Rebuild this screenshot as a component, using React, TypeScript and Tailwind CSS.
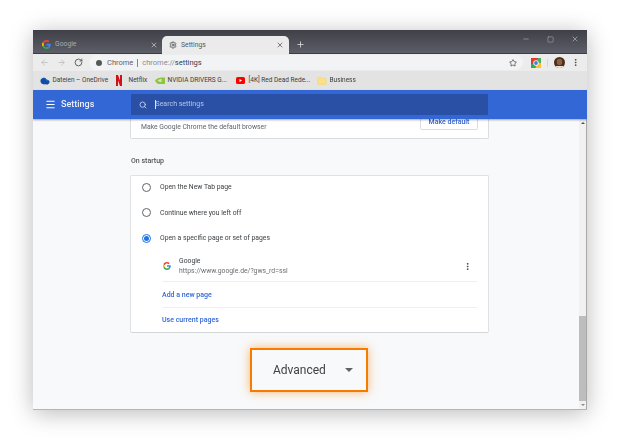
import React from "react";
import { ArrowLeft, ArrowRight, RotateCw, Menu, Search, X, Plus, Minus, Square, Star, MoreVertical, Settings, Cloud, Folder } from "lucide-react";

function GoogleG({ size = 12 }: { size?: number }) {
  return (
    <svg width={size} height={size} viewBox="0 0 48 48" className="shrink-0">
      <path fill="#EA4335" d="M24 9.5c3.5 0 6.7 1.3 9.1 3.5l6.8-6.8C35.8 2.4 30.2 0 24 0 14.6 0 6.5 5.4 2.6 13.2l7.9 6.1C12.4 13.6 17.7 9.5 24 9.5z" />
      <path fill="#4285F4" d="M46.5 24.5c0-1.6-.1-3.1-.4-4.500H24v9h12.700c-.6 2.900-2.200 5.400-4.700 7.100l7.600 5.900c4.400-4.100 6.900-10.100 6.900-17.500z" />
      <path fill="#FBBC05" d="M10.500 28.700c-.5-1.400-.8-3-.8-4.700s.3-3.200.8-4.700l-7.900-6.100C.9 16.500 0 20.100 0 24s.9 7.500 2.600 10.800l7.900-6.100z" />
      <path fill="#34A853" d="M24 48c6.500 0 11.900-2.100 15.900-5.800L32.300 36.300c-2.100 1.400-4.900 2.300-8.300 2.300-6.300 0-11.600-4.100-13.500-9.900l-7.900 6.100C6.500 42.600 14.600 48 24 48z" />
    </svg>
  );
}

function Bookmark({ icon, label, w }: { icon: React.ReactNode; label: string; w: string }) {
  return (
    <div className={`flex items-center ${w}`}>
      <div className="w-[12.5px] shrink-0 flex items-center">{icon}</div>
      <span className="text-[6.5px] text-[#3c3c3c] whitespace-nowrap">{label}</span>
    </div>
  );
}

function Radio({ checked, label }: { checked?: boolean; label: string }) {
  return (
    <div className="h-[25.5px] flex items-center pl-[11px] gap-[9px]">
      <div className={`w-[9px] h-[9px] rounded-full border-[1.5px] flex items-center justify-center ${checked ? "border-[#1a73e8]" : "border-[#5f6368]"}`}>
        {checked && <div className="w-[4.5px] h-[4.5px] rounded-full bg-[#1a73e8]" />}
      </div>
      <span className="text-[6.8px] text-[#3c4043]">{label}</span>
    </div>
  );
}

export default function App() {
  return (
    <div className="w-[620px] h-[440px] bg-white pt-[30px] pl-[33px] overflow-hidden font-['Roboto',sans-serif]">
      <div className="w-[554px] h-[380px] flex flex-col overflow-hidden shadow-[0_3px_22px_rgba(0,0,0,0.28)] border-b border-[#b5b5b5] blur-[0.3px]">
        {/* Tab strip */}
        <div className="h-[24px] shrink-0 flex items-end bg-gradient-to-b from-[#3f4047] to-[#5c5e68] border-b border-[#3d3e45]">
          <div className="w-[129px] h-[18px] flex items-center pl-[9px] pr-[4px] pt-[1px] gap-[4px]">
            <GoogleG size={9} />
            <span className="text-[6.8px] text-[#a9abb0] flex-1">Google</span>
            <X size={8} className="text-[#d5d6d9]" strokeWidth={2} />
          </div>
          <div className="w-[127px] h-[18px] -mb-px bg-[#ebebeb] rounded-t-[5px] flex items-center pl-[7px] pr-[5px] gap-[4px]">
            <Settings size={8} className="text-[#55575c]" strokeWidth={2.6} />
            <span className="text-[6.8px] text-[#55575c] flex-1">Settings</span>
            <X size={8} className="text-[#444]" strokeWidth={2} />
          </div>
          <div className="h-[18px] flex items-center pl-[7px]">
            <Plus size={9} className="text-[#d8d9dc]" strokeWidth={2.2} />
          </div>
          <div className="flex-1" />
          <div className="h-[18px] flex items-center self-start gap-[17px] pr-[8px]">
            <Minus size={8} className="text-[#a5a7ac]" />
            <Square size={7} className="text-[#a5a7ac]" />
            <X size={8} className="text-[#b9bbbf]" />
          </div>
        </div>

        {/* Toolbar */}
        <div className="h-[17px] shrink-0 bg-[#ececec] flex items-center pl-[7px]">
          <ArrowLeft size={9} className="text-[#b8b9ba]" />
          <ArrowRight size={9} className="text-[#b8b9ba] ml-[7.5px]" />
          <RotateCw size={9} className="text-[#555] ml-[8px]" strokeWidth={2.4} />
          <div className="ml-[6.5px] w-[434px] h-[15px] rounded-full bg-[#f2f3f5] flex items-center pl-[7px] pr-[6px]">
            <div className="w-[6px] h-[6px] rounded-full bg-[#55575a]" />
            <span className="text-[7.5px] text-[#5f6368] ml-[5px]">Chrome</span>
            <span className="w-px h-[8px] bg-[#888] mx-[4px]" />
            <span className="text-[7.5px] text-[#8a8c90]">chrome://<span className="text-[#3c4043]">settings</span></span>
            <div className="flex-1" />
            <Star size={8} className="text-[#333]" strokeWidth={2} />
          </div>
          <svg width="10" height="10" viewBox="0 0 10 10" className="ml-[8px] shrink-0">
            <rect width="10" height="10" fill="#e33a2e" />
            <path d="M7 0h3v5H5z" fill="#4fae5c" />
            <path d="M0 6h3l2 4H0z" fill="#34a853" />
            <path d="M10 5v5H4.500L5 5z" fill="#fbc02d" />
            <circle cx="5" cy="5" r="2.700" fill="#fff" />
            <circle cx="5" cy="5" r="1.900" fill="#3f7fe8" />
          </svg>
          <div className="w-px h-[8px] bg-[#d4d4d4] ml-[6px]" />
          <svg width="11" height="11" viewBox="0 0 11 11" className="ml-[5.500px] shrink-0">
            <defs>
              <clipPath id="av"><circle cx="5.500" cy="5.500" r="5.500" /></clipPath>
            </defs>
            <g clipPath="url(#av)">
              <rect width="11" height="11" fill="#4a2f1e" />
              <ellipse cx="5.500" cy="5" rx="2.700" ry="3.200" fill="#8f5f3f" />
              <rect x="2" y="9" width="7" height="2" fill="#e8e4df" />
            </g>
          </svg>
          <MoreVertical size={9} className="text-[#444] ml-[6.5px]" strokeWidth={2.4} />
        </div>

        {/* Bookmarks */}
        <div className="h-[19px] shrink-0 bg-[#e3e3e3] flex items-center pl-[7px]">
          <Bookmark w="w-[76px]" label="Dateien – OneDrive" icon={<Cloud size={10} className="text-[#0f4fa8] fill-[#0f4fa8]" />} />
          <Bookmark w="w-[39px]" label="Netflix" icon={
            <svg width="6" height="11" viewBox="0 0 6 11"><path d="M0 0h2v11H0zM4 0h2v11H4z" fill="#c4161f" /><path d="M0 0h2l4 11H4z" fill="#e50914" /></svg>
          } />
          <Bookmark w="w-[81px]" label="NVIDIA DRIVERS G..." icon={
            <svg width="10" height="7" viewBox="0 0 10 7"><path d="M0 3.500C2 1 4 .5 10 .5V7H3C1.500 6 .5 5 0 3.500z" fill="#8cc63f" /><path d="M2.500 3.500C4 2.500 5 2 6.500 2v3C5 5 4 4.500 2.500 3.500z" fill="#d5e8b0" /></svg>
          } />
          <Bookmark w="w-[81px]" label="[4K] Red Dead Rede..." icon={
            <svg width="9" height="7" viewBox="0 0 9 7"><rect width="9" height="7" rx="1.600" fill="#f00" /><path d="M3.500 2v3l2.500-1.500z" fill="#fff" /></svg>
          } />
          <Bookmark w="w-[60px]" label="Business" icon={<Folder size={10} className="text-[#f7d774] fill-[#fbe08a]" />} />
        </div>

        {/* Blue header */}
        <div className="h-[29px] shrink-0 bg-[#3367d6] flex items-center shadow-[0_1px_2px_rgba(0,0,0,0.35)] z-10">
          <div className="w-[98px] shrink-0 flex items-center pl-[12px] gap-[5px]">
            <Menu size={11} className="text-white" strokeWidth={2.4} />
            <span className="text-[9px] font-medium text-[#e8effc]">Settings</span>
          </div>
          <div className="w-[357px] h-[21px] bg-[#2a50a6] flex items-center pl-[7.5px] gap-[8px]">
            <Search size={8} className="text-[#d3ddf2]" strokeWidth={2.4} />
            <span className="text-[7px] text-[#b5c5ea] border-l border-[#dfe6f6] leading-[9px]">Search settings</span>
          </div>
        </div>

        {/* Content */}
        <div className="flex-1 flex min-h-0 bg-[#f8f9fa]">
          <div className="flex-1 flex flex-col items-start pl-[97px] min-w-0">
            <div className="w-[359px] h-[20px] shrink-0 bg-white rounded-b-[2px] border border-t-0 border-[#dcdddf] flex items-start justify-between pl-[10px] pr-[10px]">
              <span className="text-[6.8px] text-[#5f6368] leading-[10px] mt-[3px]">Make Google Chrome the default browser</span>
              <div className="w-[58px] h-[11px] border border-t-0 border-[#dadce0] rounded-b-[2px] flex items-start justify-center">
                <span className="text-[7px] font-medium text-[#3367d6] leading-[6px]">Make default</span>
              </div>
            </div>
            <div className="text-[7px] font-medium text-[#54565b] mt-[17px] ml-[1px] h-[10px] leading-[10px]">On startup</div>
            <div className="mt-[9px] w-[359px] h-[158px] shrink-0 bg-white rounded-[2px] border border-[#e0e1e3] border-b-[#d5d6d8]">
              <div className="-mt-[1.5px]">
                <Radio label="Open the New Tab page" />
                <Radio label="Continue where you left off" />
                <Radio checked label="Open a specific page or set of pages" />
              </div>
              <div className="flex items-center h-[24px] pl-[32px] pr-[16px] mt-[3px]">
                <GoogleG size={8} />
                <div className="ml-[8px] flex-1 flex flex-col">
                  <span className="text-[6.8px] leading-[10px] text-[#3c4043]">Google</span>
                  <span className="text-[6.8px] leading-[10px] text-[#6a6d72]">https://www.google.de/?gws_rd=ssl</span>
                </div>
                <MoreVertical size={9} className="text-[#444]" strokeWidth={2.6} />
              </div>
              <div className="ml-[31px] mr-[11px] border-t border-[#efefef] mt-[3px] h-[25.5px] pt-[1px] flex items-center">
                <span className="text-[7px] font-medium text-[#3367d6]">Add a new page</span>
              </div>
              <div className="ml-[31px] mr-[11px] border-t border-[#efefef] h-[26px] pt-[1px] flex items-center">
                <span className="text-[7px] font-medium text-[#3367d6]">Use current pages</span>
              </div>
            </div>
            <div className="mt-[15px] ml-[120px] w-[118px] h-[44px] shrink-0 border-[2px] border-[#f57c00] shadow-[0_0_9px_rgba(245,124,0,0.55)] flex items-center pl-[21px]">
              <span className="text-[12px] text-[#3f4145]">Advanced</span>
              <div className="ml-[19px] w-0 h-0 border-l-[4px] border-r-[4px] border-t-[4px] border-l-transparent border-r-transparent border-t-[#5f6368]" />
            </div>
          </div>
          {/* Scrollbar */}
          <div className="w-[8px] shrink-0 bg-[#f1f1f1] flex flex-col items-center border-r border-[#a9a9a9]">
            <div className="h-[8px] flex items-center justify-center shrink-0">
              <div className="w-0 h-0 border-l-[2.5px] border-r-[2.5px] border-b-[2.5px] border-l-transparent border-r-transparent border-b-[#505050]" />
            </div>
            <div className="flex-1" />
            <div className="w-full h-[85px] bg-[#bdbdbd] shrink-0" />
            <div className="h-[8px] flex items-center justify-center shrink-0">
              <div className="w-0 h-0 border-l-[2.5px] border-r-[2.5px] border-t-[2.5px] border-l-transparent border-r-transparent border-t-[#8a8a8a]" />
            </div>
          </div>
        </div>
      </div>
    </div>
  );
}
